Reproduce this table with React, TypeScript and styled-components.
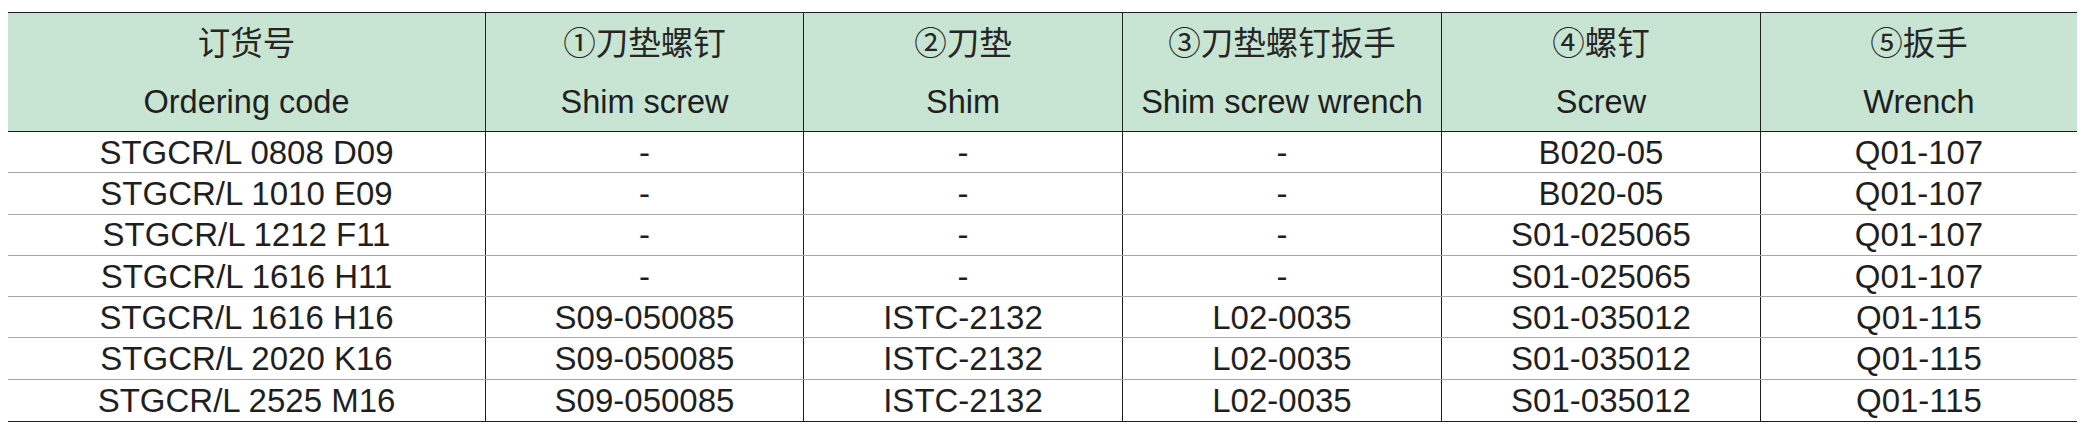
import React from "react";
import styled, { createGlobalStyle } from "styled-components";

const GlobalStyle = createGlobalStyle`
  html, body {
    margin: 0;
    padding: 0;
    background: #ffffff;
  }
  body {
    font-family: "Liberation Sans", Arial, "Noto Sans CJK SC", sans-serif;
    color: #222222;
  }
`;

const Page = styled.div`
  padding: 12px 5px 0 8px;
  width: 2082px;
  box-sizing: border-box;
`;

const Table = styled.div`
  width: 2069px;
  border-top: 1px solid #1e1e1e;
  border-bottom: 1px solid #1e1e1e;
`;

const columns = "477px 318px 319px 319px 319px 317px";

const HeaderRow = styled.div`
  display: grid;
  grid-template-columns: ${columns};
  background: #c8e4d3;
  border-bottom: 1px solid #1e1e1e;
`;

const HeaderCell = styled.div<{ $first?: boolean }>`
  display: flex;
  flex-direction: column;
  align-items: center;
  padding: 0 0 1px;
  border-left: ${(p) => (p.$first ? "none" : "1px solid #1e1e1e")};
  white-space: nowrap;
`;

const HeaderZh = styled.div`
  height: 61px;
  line-height: 56px;
  font-family: "Noto Sans CJK SC", "Liberation Sans", sans-serif;
  font-size: 32.5px;
  font-weight: 400;
  color: #262626;
`;

const HeaderEn = styled.div`
  height: 56px;
  line-height: 56px;
  font-family: "Liberation Sans", Arial, sans-serif;
  font-size: 32.5px;
  color: #1f1f1f;
`;

const Row = styled.div<{ $last?: boolean }>`
  display: grid;
  grid-template-columns: ${columns};
  height: 41.3px;
  box-sizing: border-box;
  border-bottom: ${(p) => (p.$last ? "none" : "1px solid #a8a8a8")};
`;

const Cell = styled.div<{ $first?: boolean }>`
  display: flex;
  align-items: center;
  justify-content: center;
  border-left: ${(p) => (p.$first ? "none" : "1px solid #1e1e1e")};
  font-family: "Liberation Sans", Arial, sans-serif;
  font-size: 33px;
  line-height: 1;
  color: #1f1f1f;
  white-space: nowrap;
`;

const headers: [string, string][] = [
  ["订货号", "Ordering code"],
  ["①刀垫螺钉", "Shim screw"],
  ["②刀垫", "Shim"],
  ["③刀垫螺钉扳手", "Shim screw wrench"],
  ["④螺钉", "Screw"],
  ["⑤扳手", "Wrench"],
];

const rows: string[][] = [
  ["STGCR/L 0808 D09", "-", "-", "-", "B020-05", "Q01-107"],
  ["STGCR/L 1010 E09", "-", "-", "-", "B020-05", "Q01-107"],
  ["STGCR/L 1212 F11", "-", "-", "-", "S01-025065", "Q01-107"],
  ["STGCR/L 1616 H11", "-", "-", "-", "S01-025065", "Q01-107"],
  ["STGCR/L 1616 H16", "S09-050085", "ISTC-2132", "L02-0035", "S01-035012", "Q01-115"],
  ["STGCR/L 2020 K16", "S09-050085", "ISTC-2132", "L02-0035", "S01-035012", "Q01-115"],
  ["STGCR/L 2525 M16", "S09-050085", "ISTC-2132", "L02-0035", "S01-035012", "Q01-115"],
];

export default function App() {
  return (
    <>
      <GlobalStyle />
      <Page>
        <Table>
          <HeaderRow>
            {headers.map(([zh, en], i) => (
              <HeaderCell key={i} $first={i === 0}>
                <HeaderZh>{zh}</HeaderZh>
                <HeaderEn>{en}</HeaderEn>
              </HeaderCell>
            ))}
          </HeaderRow>
          {rows.map((r, ri) => (
            <Row key={ri} $last={ri === rows.length - 1}>
              {r.map((v, ci) => (
                <Cell key={ci} $first={ci === 0}>
                  {v}
                </Cell>
              ))}
            </Row>
          ))}
        </Table>
      </Page>
    </>
  );
}
